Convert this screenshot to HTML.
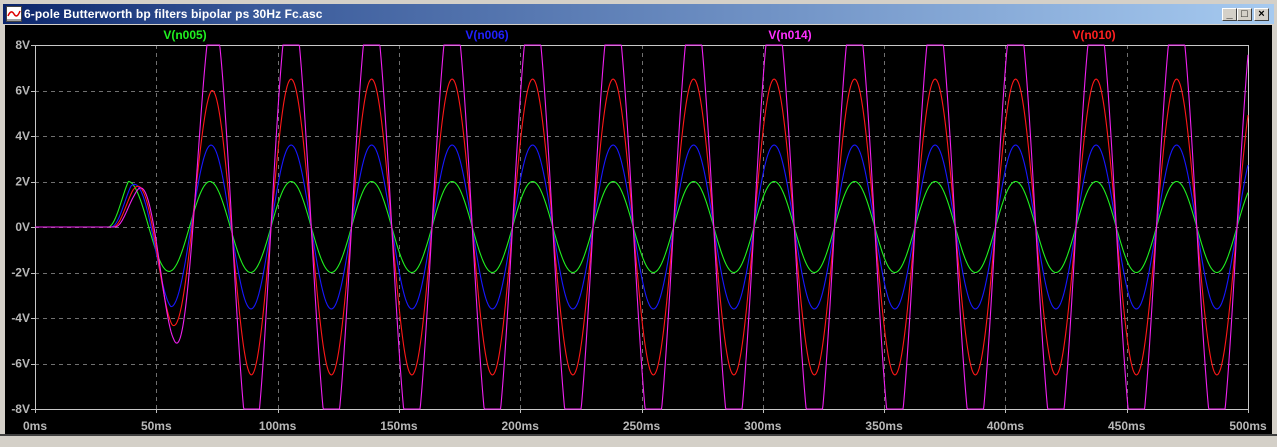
<!DOCTYPE html>
<html><head><meta charset="utf-8"><style>
html,body{margin:0;padding:0;background:#d4d0c8;width:1277px;height:447px;overflow:hidden;font-family:"Liberation Sans",sans-serif}
#title{position:absolute;left:3px;top:4px;width:1271px;height:20px;background:linear-gradient(to right,#0a246a,#3a5a9a 20%,#a6caf0)}
#title span{position:absolute;left:21px;top:3px;color:#fff;font-weight:bold;font-size:12px;letter-spacing:0.1px}
.btn{position:absolute;top:8px;width:15px;height:13px;background:#d4d0c8;border:1px solid;border-color:#fff #404040 #404040 #fff;box-sizing:border-box;font-size:11px;font-weight:bold;text-align:center;line-height:11px;color:#000}
#plot{position:absolute;left:5px;top:25px}
</style></head><body>
<div id="title">
<svg style="position:absolute;left:3px;top:2px" width="16" height="16"><rect x="0.5" y="0.5" width="15" height="15" fill="#fff" stroke="#444"/><path d="M2 10 Q5 3 8 8 T14 5" stroke="#d00" stroke-width="1.5" fill="none"/><path d="M0 14 H16" stroke="#444"/></svg>
<span>6-pole Butterworth bp filters bipolar ps 30Hz Fc.asc</span></div>
<div class="btn" style="left:1222px">_</div>
<div class="btn" style="left:1237px">□</div>
<div class="btn" style="left:1254px">×</div>
<svg id="plot" width="1267" height="409" viewBox="5 25 1267 409">
<rect x="5" y="25" width="1267" height="409" fill="#000"/>
<g id="grid" stroke="#707070" stroke-dasharray="4,4" stroke-width="1"></g>
<rect x="35.5" y="45.5" width="1213" height="364" fill="none" stroke="#c8c8c8"/>
<g id="traces" fill="none" stroke-width="1.1"></g>
<g id="labels" fill="#b8b8b8" font-family="Liberation Sans, sans-serif" font-weight="bold" font-size="12"></g>
<g font-family="Liberation Sans, sans-serif" font-weight="bold" font-size="12" text-anchor="middle">
<text x="185" y="39" fill="#20f020">V(n005)</text>
<text x="487" y="39" fill="#2020ff">V(n006)</text>
<text x="790" y="39" fill="#ff30ff">V(n014)</text>
<text x="1094" y="39" fill="#ff2020">V(n010)</text>
</g>
</svg>
<div style="position:absolute;left:0;top:434px;width:1277px;height:2px;background:#404040"></div>
<script>
var ns="http://www.w3.org/2000/svg";
function el(p,t,a,txt){var e=document.createElementNS(ns,t);for(var k in a)e.setAttribute(k,a[k]);if(txt)e.textContent=txt;p.appendChild(e);return e;}
var g=document.getElementById('grid'),L=document.getElementById('labels'),T=document.getElementById('traces');
var X0=35,X1=1248,Y0=45,Y1=409;
for(var k=0;k<=10;k++){var x=X0+(X1-X0)*k/10;var xr=Math.round(x)+0.5;
 if(k>0&&k<10)el(g,'line',{x1:xr,y1:Y0,x2:xr,y2:Y1});
 el(L,'line',{x1:xr,y1:Y1,x2:xr,y2:Y1+4,stroke:'#c0c0c0'});
 el(L,'text',{x:x,y:430,'text-anchor':'middle'},(k*50)+'ms');}
for(var k=0;k<=8;k++){var y=Y0+(Y1-Y0)*k/8;var yr=Math.round(y)+0.5;
 if(k>0&&k<8)el(g,'line',{x1:X0,y1:yr,x2:X1,y2:yr});
 el(L,'line',{x1:31,y1:yr,x2:X0,y2:yr,stroke:'#c0c0c0'});
 el(L,'text',{x:30,y:y+4,'text-anchor':'end'},(8-2*k)+'V');}
var P=80.5,S=110;
var tr=[
 {c:'#20f020',a:[2,1.95,2,2],d:-2},
 {c:'#1818ff',a:[1.8,3.5,3.6,3.6],d:1},
 {c:'#ff1818',a:[1.6,4.3,6.0,6.5],d:3},
 {c:'#f020f0',a:[1.4,4.9,9.5,10],d:5}];
var yc=(Y0+Y1)/2,sc=(Y1-Y0)/16;
function env(a,hc){
 if(hc<0.5)return a[0]*Math.min(1,hc*2);
 if(hc>=3.5)return a[3];
 var i=Math.floor(hc-0.5),f=hc-0.5-i;return a[i]+(a[i+1]-a[i])*f;}
tr.forEach(function(t){var pts=[];
 for(var x=X0;x<=X1;x+=0.5){var v=0;
  var xs=x-S-t.d*Math.max(0,1-(x-S)/(2*P));
  if(xs>0){var ph=xs/P;v=env(t.a,ph*2)*Math.sin(2*Math.PI*ph);}
  var y=yc-v*sc;y=Math.max(Y0,Math.min(Y1,y));pts.push(x.toFixed(1)+','+y.toFixed(1));}
 el(T,'polyline',{points:pts.join(' '),stroke:t.c});});
</script>
</body></html>
